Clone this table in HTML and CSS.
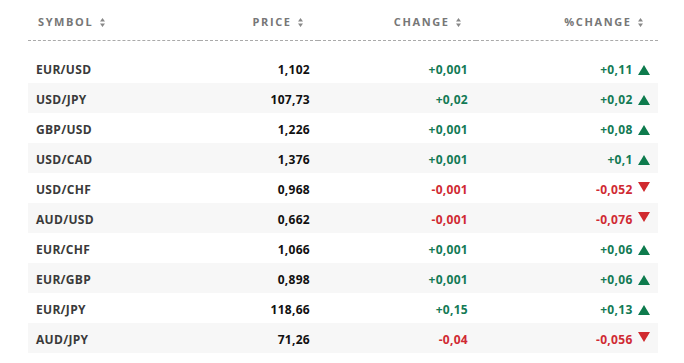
FILE: index.html
```html
<!DOCTYPE html>
<html lang="en">
<head>
  <meta charset="UTF-8" />
  <title>Forex Rates</title>
  <link rel="stylesheet" href="styles.css">
</head>
<body>

  <div class="rates-wrapper">
    <table class="rates">
      <colgroup>
        <col class="col-symbol">
        <col class="col-price">
        <col class="col-change">
        <col class="col-pct">
      </colgroup>
      <thead>
        <tr>
          <th class="left">SYMBOL <svg class="sort" width="5" height="9" viewBox="0 0 5 9"><path d="M2.5 0L5 3.5H0Z M0 5.5H5L2.5 9Z"/></svg></th>
          <th>PRICE <svg class="sort" width="5" height="9" viewBox="0 0 5 9"><path d="M2.5 0L5 3.5H0Z M0 5.5H5L2.5 9Z"/></svg></th>
          <th>CHANGE <svg class="sort" width="5" height="9" viewBox="0 0 5 9"><path d="M2.5 0L5 3.5H0Z M0 5.5H5L2.5 9Z"/></svg></th>
          <th>%CHANGE <svg class="sort" width="5" height="9" viewBox="0 0 5 9"><path d="M2.5 0L5 3.5H0Z M0 5.5H5L2.5 9Z"/></svg></th>
        </tr>
      </thead>
      <tbody>
        <tr class="spacer"><td colspan="4"></td></tr>
        <tr><td class="sym">EUR/USD</td><td class="price">1,102</td><td class="up">+0,001</td><td class="up">+0,11 <span class="arrow-up"></span></td></tr>
        <tr><td class="sym">USD/JPY</td><td class="price">107,73</td><td class="up">+0,02</td><td class="up">+0,02 <span class="arrow-up"></span></td></tr>
        <tr><td class="sym">GBP/USD</td><td class="price">1,226</td><td class="up">+0,001</td><td class="up">+0,08 <span class="arrow-up"></span></td></tr>
        <tr><td class="sym">USD/CAD</td><td class="price">1,376</td><td class="up">+0,001</td><td class="up">+0,1 <span class="arrow-up"></span></td></tr>
        <tr><td class="sym">USD/CHF</td><td class="price">0,968</td><td class="down">-0,001</td><td class="down">-0,052 <span class="arrow-down"></span></td></tr>
        <tr><td class="sym">AUD/USD</td><td class="price">0,662</td><td class="down">-0,001</td><td class="down">-0,076 <span class="arrow-down"></span></td></tr>
        <tr><td class="sym">EUR/CHF</td><td class="price">1,066</td><td class="up">+0,001</td><td class="up">+0,06 <span class="arrow-up"></span></td></tr>
        <tr><td class="sym">EUR/GBP</td><td class="price">0,898</td><td class="up">+0,001</td><td class="up">+0,06 <span class="arrow-up"></span></td></tr>
        <tr><td class="sym">EUR/JPY</td><td class="price">118,66</td><td class="up">+0,15</td><td class="up">+0,13 <span class="arrow-up"></span></td></tr>
        <tr><td class="sym">AUD/JPY</td><td class="price">71,26</td><td class="down">-0,04</td><td class="down">-0,056 <span class="arrow-down"></span></td></tr>
      </tbody>
    </table>
  </div>

</body>
</html>
```

FILE: styles.css
```css
* {
  box-sizing: border-box;
}

body {
  margin: 0;
  background: #fff;
  font-family: 'Open Sans', 'Liberation Sans', sans-serif;
  color: #222;
}

.rates-wrapper {
  padding: 0 26px 0 28px;
}

.rates {
  width: 630px;
  border-collapse: collapse;
  table-layout: fixed;
}

.col-symbol { width: 172px; }
.col-price { width: 118px; }
.col-change { width: 158px; }
.col-pct { width: 182px; }

.rates th {
  height: 40px;
  padding: 4px 15px 0 8px;
  text-align: right;
  font-size: 11px;
  font-weight: 700;
  letter-spacing: 1.6px;
  color: #777;
  border-bottom: 1px dashed #aaa;
  white-space: nowrap;
}

.rates th.left {
  text-align: left;
  padding-left: 10px;
}

.sort {
  fill: #888;
  margin-left: 2px;
  vertical-align: -1px;
}

.rates td {
  height: 30px;
  padding: 3px 8px 0;
  text-align: right;
  font-size: 12px;
  font-weight: 700;
  letter-spacing: 0.3px;
  white-space: nowrap;
}

.rates .spacer td {
  height: 13px;
  padding: 0;
  background: #fff;
}

.rates tbody tr:nth-child(odd) td {
  background: #f7f7f7;
}

.rates tbody tr.spacer td {
  background: #fff;
}

.rates td.sym {
  text-align: left;
  color: #3a3a3a;
}

.price {
  color: #111;
}

.up {
  color: #137a55;
}

.down {
  color: #d02a33;
}

.arrow-up, .arrow-down {
  display: inline-block;
  width: 0;
  height: 0;
  margin-left: 2px;
  border-left: 6px solid transparent;
  border-right: 6px solid transparent;
}

.arrow-up {
  border-bottom: 10px solid #0e7b4d;
  vertical-align: -1px;
}

.arrow-down {
  border-top: 10px solid #d02a2f;
  vertical-align: 2px;
}
```
